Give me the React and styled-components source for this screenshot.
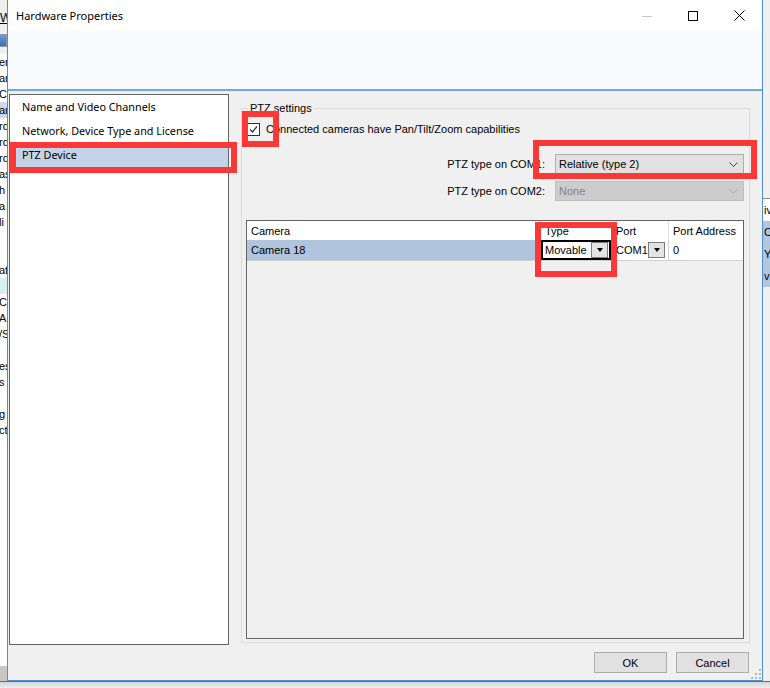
import styled, { createGlobalStyle } from 'styled-components'

const GlobalStyle = createGlobalStyle`
  html, body {
    margin: 0;
    padding: 0;
    background: #f0f0f0;
    overflow: hidden;
  }
  body {
    font-family: 'Liberation Sans', Arial, sans-serif;
    font-size: 11px;
    color: #000;
  }
`

const Screen = styled.div`
  width: 770px;
  height: 688px;
  display: flex;
  flex-direction: column;
  overflow: hidden;
`

const Desktop = styled.div`
  display: flex;
  height: 681px;
  flex: none;
`

const Shadow = styled.div`
  flex: 1;
  border-top: 1px solid #6e6e6e;
  background: linear-gradient(#d4d4d4, #efefef);
`

/* windows lying behind the dialog */
const BackLeft = styled.div`
  width: 7px;
  flex: none;
  overflow: hidden;
  display: flex;
  flex-direction: column;
  background: #fff;
`

const BackMenu = styled.div`
  height: 31px;
  flex: none;
  background: #f0f0f0;
  padding-top: 11px;
  box-sizing: border-box;
  white-space: nowrap;
  font-size: 12px;
  u { text-decoration: underline; }
`

const BackTools = styled.div`
  height: 23px;
  flex: none;
  background: #f0f0f0;
  display: flex;
  align-items: center;
`

const BackIcon = styled.div`
  width: 6px;
  height: 11px;
  margin-top: -4px;
  background: linear-gradient(#6f9ad6, #3c6fb8);
  border: 1px solid #8d9aab;
  border-left: none;
`

const BackLines = styled.div`
  flex: 1;
  display: flex;
  flex-direction: column;
`

const BackLine = styled.div`
  height: 16px;
  line-height: 16px;
  white-space: nowrap;
  margin-left: -1px;
  background: ${(p) => p.bg || 'transparent'};
`

const BackBottom = styled.div`
  height: 15px;
  flex: none;
  background: #c6c6c6;
`

const BackRight = styled.div`
  flex: 1;
  overflow: hidden;
  display: flex;
  flex-direction: column;
  background: #f0f0f0;
`

const BackRightTop = styled.div`
  height: 198px;
  flex: none;
  border-bottom: 1px solid #8a8a8a;
`

const BackRow = styled.div`
  height: 22px;
  line-height: 22px;
  white-space: nowrap;
  padding-left: 1px;
  background: ${(p) => (p.sel ? '#b3c6e0' : '#fff')};
`

/* the dialog itself */
const Dialog = styled.div`
  position: relative;
  width: 754px;
  flex: none;
  display: flex;
  flex-direction: column;
  border: 1px solid #4d8fd6;
  border-top: none;
  background: #f0f0f0;
`

const TitleBar = styled.div`
  height: 31px;
  flex: none;
  display: flex;
  align-items: center;
  justify-content: space-between;
  background: #fff;
`

const Title = styled.div`
  padding-left: 8px;
  font-family: 'Noto Sans', 'Open Sans', sans-serif;
  font-size: 11px;
`

const Controls = styled.div`
  display: flex;
  height: 100%;
`

const CtrlButton = styled.div`
  width: 46px;
  height: 100%;
  display: flex;
  align-items: center;
  justify-content: center;
`

const Banner = styled.div`
  height: 58px;
  flex: none;
  background: #f8fafd;
  border-bottom: 2px solid #70a9df;
`

const Body = styled.div`
  flex: 1;
  display: flex;
  flex-direction: column;
  padding-top: 3px;
`

const Main = styled.div`
  height: 551px;
  flex: none;
  display: flex;
  padding-left: 1px;
`

const PageList = styled.div`
  width: 220px;
  flex: none;
  box-sizing: border-box;
  border: 1px solid #646464;
  background: #fff;
  padding-left: 6px;
  font-family: 'Noto Sans', 'Open Sans', sans-serif;
  font-size: 10.8px;
`

const PageItem = styled.div`
  height: 24px;
  line-height: 23px;
  padding-left: 6px;
  background: ${(p) => (p.selected ? '#c4d4e8' : 'transparent')};
`

const Group = styled.div`
  width: 509px;
  height: 535px;
  margin: 14px 0 0 12px;
  box-sizing: border-box;
  border: 1px solid #dcdcdc;
  display: flex;
  flex-direction: column;
  padding: 0 5px 3px 4px;
`

const GroupTitle = styled.div`
  align-self: flex-start;
  margin: -8px 0 0 2px;
  padding: 0 2px;
  line-height: 14px;
  background: #f0f0f0;
`

const CheckRow = styled.label`
  display: flex;
  align-items: center;
  gap: 6px;
  height: 14px;
  margin-top: 7px;
  padding-left: 1px;
`

const CheckBox = styled.span`
  width: 13px;
  height: 13px;
  box-sizing: border-box;
  border: 1px solid #333;
  background: #fff;
  display: flex;
  align-items: center;
  justify-content: center;
`

const ComGrid = styled.div`
  display: grid;
  grid-template-columns: 1fr 189px;
  column-gap: 10px;
  row-gap: 7px;
  margin-top: 18px;
  align-items: center;
`

const ComLabel = styled.div`
  text-align: right;
`

const Select = styled.div`
  height: 20px;
  box-sizing: border-box;
  display: flex;
  align-items: center;
  justify-content: space-between;
  padding: 0 5px 0 3px;
  border: 1px solid ${(p) => (p.disabled ? '#bfbfbf' : '#adadad')};
  background: ${(p) => (p.disabled ? '#cccccc' : '#e1e1e1')};
  color: ${(p) => (p.disabled ? '#838383' : '#000')};
`

const DataGrid = styled.div`
  flex: 1;
  margin-top: 19px;
  border: 1px solid #646464;
  background: #f0f0f0;
  display: flex;
  flex-direction: column;
`

const GridRow = styled.div`
  display: grid;
  grid-template-columns: 294px 73px 55px 74px;
  height: ${(p) => (p.header ? '19px' : '21px')};
  box-sizing: border-box;
  border-bottom: ${(p) => (p.header ? 'none' : '1px solid #d0d0d0')};
  background: #fff;
`

const Cell = styled.div`
  display: flex;
  align-items: center;
  padding-left: ${(p) => (p.pad != null ? p.pad : 4)}px;
  border-right: 1px solid ${(p) => (p.header ? '#e3e3e3' : '#d0d0d0')};
  background: ${(p) => (p.selected ? '#b0c4de' : 'transparent')};
  white-space: nowrap;
  overflow: hidden;
  &:last-child { border-right: none; }
`

const Editor = styled.div`
  flex: 1;
  height: 100%;
  box-sizing: border-box;
  border: 2px solid #000;
  display: flex;
  align-items: center;
  padding-left: 2px;
  margin-right: 2px;
`

const DropButton = styled.span`
  width: 17px;
  height: 16px;
  box-sizing: border-box;
  margin-left: auto;
  margin-right: ${(p) => p.mr || 0}px;
  border: 1px solid #7c7c7c;
  background: #e3e3e3;
  display: flex;
  align-items: center;
  justify-content: center;
  &::after {
    content: '';
    border-left: 3.5px solid transparent;
    border-right: 3.5px solid transparent;
    border-top: 4px solid #000;
  }
`

const Footer = styled.div`
  display: flex;
  justify-content: flex-end;
  gap: 9px;
  padding: 7px 13px 0 0;
`

const Button = styled.div`
  width: 73px;
  height: 21px;
  box-sizing: border-box;
  border: 1px solid #adadad;
  background: #e1e1e1;
  display: flex;
  align-items: center;
  justify-content: center;
`

const Grip = styled.svg`
  position: absolute;
  right: 1px;
  bottom: 1px;
`

const Marker = styled.div`
  position: absolute;
  left: ${(p) => p.x}px;
  top: ${(p) => p.y}px;
  width: ${(p) => p.w}px;
  height: ${(p) => p.h}px;
  box-sizing: border-box;
  border: 6px solid #fa3838;
  pointer-events: none;
`

const Chevron = ({ color }) => (
  <svg width="9" height="5" viewBox="0 0 9 5">
    <polyline points="0.5,0.5 4.5,4.5 8.5,0.5" fill="none" stroke={color} strokeWidth="1" />
  </svg>
)

const leftLines = [
  ['er'], ['an'], ['Co'], ['ar', '#cdd8e8'], ['rd'], ['rd'], ['rd'], ['as'], ['h'], ['a'],
  ['li'], [''], [''], ['at'], ['', '#d6f0f4'], ['C'], ['A'], ['/S'], [''], ['es'], ['s'],
  [''], ['g'], ['ct'],
]

function App() {
  return (
    <Screen>
      <GlobalStyle />
      <Desktop>
        <BackLeft>
          <BackMenu><u>W</u>i</BackMenu>
          <BackTools><BackIcon /></BackTools>
          <BackLines>
            {leftLines.map(([t, bg], i) => (
              <BackLine key={i} bg={bg}>{t}</BackLine>
            ))}
          </BackLines>
          <BackBottom />
        </BackLeft>

        <Dialog>
          <TitleBar>
            <Title>Hardware Properties</Title>
            <Controls>
              <CtrlButton>
                <svg width="10" height="10" viewBox="0 0 10 10">
                  <line x1="0" y1="5.5" x2="10" y2="5.5" stroke="#c6c6c6" strokeWidth="1" />
                </svg>
              </CtrlButton>
              <CtrlButton>
                <svg width="10" height="10" viewBox="0 0 10 10">
                  <rect x="0.5" y="0.5" width="9" height="9" fill="none" stroke="#000" strokeWidth="1" />
                </svg>
              </CtrlButton>
              <CtrlButton>
                <svg width="11" height="11" viewBox="0 0 11 11">
                  <path d="M0.5 0.5 L10.5 10.5 M10.5 0.5 L0.5 10.5" stroke="#000" strokeWidth="1" />
                </svg>
              </CtrlButton>
            </Controls>
          </TitleBar>
          <Banner />

          <Body>
            <Main>
              <PageList>
                <PageItem>Name and Video Channels</PageItem>
                <PageItem>Network, Device Type and License</PageItem>
                <PageItem selected>PTZ Device</PageItem>
              </PageList>

              <Group>
                <GroupTitle>PTZ settings</GroupTitle>
                <CheckRow>
                  <CheckBox>
                    <svg width="11" height="11" viewBox="0 0 11 11">
                      <polyline points="2,5.5 4.5,8 9,2.5" fill="none" stroke="#333" strokeWidth="1.2" />
                    </svg>
                  </CheckBox>
                  Connected cameras have Pan/Tilt/Zoom capabilities
                </CheckRow>

                <ComGrid>
                  <ComLabel>PTZ type on COM1:</ComLabel>
                  <Select>
                    Relative (type 2)
                    <Chevron color="#444" />
                  </Select>
                  <ComLabel>PTZ type on COM2:</ComLabel>
                  <Select disabled>
                    None
                    <Chevron color="#a6a6a6" />
                  </Select>
                </ComGrid>

                <DataGrid>
                  <GridRow header>
                    <Cell header>Camera</Cell>
                    <Cell header>Type</Cell>
                    <Cell header pad={2}>Port</Cell>
                    <Cell header>Port Address</Cell>
                  </GridRow>
                  <GridRow>
                    <Cell selected>Camera 18</Cell>
                    <Cell pad={0}>
                      <Editor>
                        Movable
                        <DropButton mr={1} />
                      </Editor>
                    </Cell>
                    <Cell pad={2}>
                      COM1
                      <DropButton mr={3} />
                    </Cell>
                    <Cell>0</Cell>
                  </GridRow>
                </DataGrid>
              </Group>
            </Main>

            <Footer>
              <Button>OK</Button>
              <Button>Cancel</Button>
            </Footer>
          </Body>

          <Grip width="10" height="10" viewBox="0 0 10 10">
            {[[8, 0], [8, 4], [4, 4], [8, 8], [4, 8], [0, 8]].map(([x, y]) => (
              <rect key={`${x}-${y}`} x={x} y={y} width="2" height="2" fill="#b9b9b9" />
            ))}
          </Grip>

          <Marker x={2} y={142} w={227} h={31} />
          <Marker x={234} y={111} w={37} h={36} />
          <Marker x={525} y={140} w={224} h={39} />
          <Marker x={527} y={222} w={82} h={55} />
        </Dialog>

        <BackRight>
          <BackRightTop />
          <BackRow>iv</BackRow>
          <BackRow sel>C:</BackRow>
          <BackRow sel>YP</BackRow>
          <BackRow sel>ve</BackRow>
        </BackRight>
      </Desktop>
      <Shadow />
    </Screen>
  )
}

export default App
